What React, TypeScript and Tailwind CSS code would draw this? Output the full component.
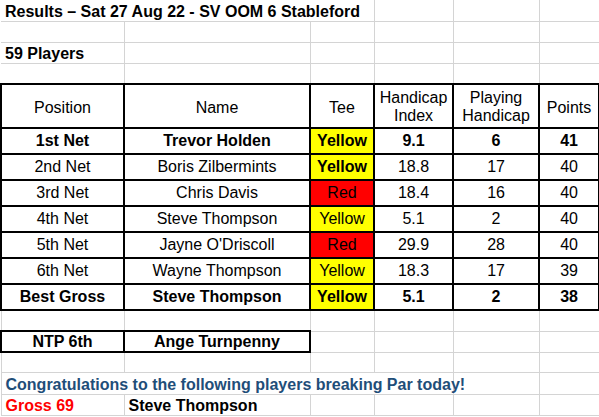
import React from 'react';

type Result = {
  pos: string;
  name: string;
  tee: 'Yellow' | 'Red';
  index: string;
  playing: string;
  points: string;
  bold?: boolean;
  teeBold?: boolean;
};

const results: Result[] = [
  { pos: '1st Net', name: 'Trevor Holden', tee: 'Yellow', index: '9.1', playing: '6', points: '41', bold: true, teeBold: true },
  { pos: '2nd Net', name: 'Boris Zilbermints', tee: 'Yellow', index: '18.8', playing: '17', points: '40', teeBold: true },
  { pos: '3rd Net', name: 'Chris Davis', tee: 'Red', index: '18.4', playing: '16', points: '40' },
  { pos: '4th Net', name: 'Steve Thompson', tee: 'Yellow', index: '5.1', playing: '2', points: '40' },
  { pos: '5th Net', name: "Jayne O'Driscoll", tee: 'Red', index: '29.9', playing: '28', points: '40' },
  { pos: '6th Net', name: 'Wayne Thompson', tee: 'Yellow', index: '18.3', playing: '17', points: '39' },
  { pos: 'Best Gross', name: 'Steve Thompson', tee: 'Yellow', index: '5.1', playing: '2', points: '38', bold: true, teeBold: true },
];

// plain sheet cell with gridlines, and a boxed (table) cell
const g = 'border border-[#d4d4d4] p-0';
const b = 'border-2 border-black p-0 text-center align-middle';

function EmptyCells({ n }: { n: number }) {
  return (
    <>
      {Array.from({ length: n }).map((_, i) => (
        <td key={i} className={g}></td>
      ))}
    </>
  );
}

export default function App() {
  return (
    <div className="w-[599px] h-[417px] bg-white overflow-hidden text-black text-[16px] leading-[18px] font-['Liberation_Sans',Arial,sans-serif]">
      <table className="border-collapse table-fixed w-[598px]">
        <colgroup>
          <col className="w-[123px]" />
          <col className="w-[186px]" />
          <col className="w-[64px]" />
          <col className="w-[79px]" />
          <col className="w-[86px]" />
          <col className="w-[60px]" />
        </colgroup>
        <tbody>
          <tr className="h-[21px]">
            <td colSpan={3} className={`${g} border-t-0 border-l-0 align-bottom pl-1 font-bold whitespace-nowrap`}>
              Results – Sat 27 Aug 22 - SV OOM 6 Stableford
            </td>
            <td className={`${g} border-t-0`}></td>
            <td className={`${g} border-t-0`}></td>
            <td className={`${g} border-t-0`}></td>
          </tr>
          <tr className="h-[21px]">
            <td className={`${g} border-l-0`}></td>
            <EmptyCells n={5} />
          </tr>
          <tr className="h-[21px]">
            <td className={`${g} border-l-0 align-bottom pl-1 font-bold whitespace-nowrap`}>59 Players</td>
            <EmptyCells n={5} />
          </tr>
          <tr className="h-[21px]">
            <td className={`${g} border-l-0`}></td>
            <EmptyCells n={5} />
          </tr>

          <tr className="h-[44px]">
            <td className={`${b} pt-1`}>Position</td>
            <td className={`${b} pt-1`}>Name</td>
            <td className={`${b} pt-1`}>Tee</td>
            <td className={`${b} pt-0.5`}>
              Handicap
              <br />
              Index
            </td>
            <td className={`${b} pt-0.5`}>
              Playing
              <br />
              Handicap
            </td>
            <td className={`${b} pt-1`}>Points</td>
          </tr>

          {results.map((r, i) => (
            <tr key={i} className={`h-[26px] ${r.bold ? 'font-bold' : ''}`}>
              <td className={b}>{r.pos}</td>
              <td className={b}>{r.name}</td>
              <td className={`${b} ${r.tee === 'Red' ? 'bg-[#ff0000]' : 'bg-[#ffff00]'} ${r.teeBold ? 'font-bold' : ''}`}>
                {r.tee}
              </td>
              <td className={b}>{r.index}</td>
              <td className={b}>{r.playing}</td>
              <td className={b}>{r.points}</td>
            </tr>
          ))}

          <tr className="h-[21px]">
            <EmptyCells n={6} />
          </tr>
          <tr className="h-[21px] font-bold">
            <td className={b}>NTP 6th</td>
            <td className={b}>Ange Turnpenny</td>
            <EmptyCells n={4} />
          </tr>
          <tr className="h-[20px]">
            <EmptyCells n={6} />
          </tr>
          <tr className="h-[22px]">
            <td colSpan={4} className={`${g} align-bottom pl-1 font-bold text-[#1f4e79] whitespace-nowrap`}>
              Congratulations to the following players breaking Par today!
            </td>
            <EmptyCells n={2} />
          </tr>
          <tr className="h-[21px] font-bold">
            <td className={`${g} align-bottom pl-1 text-[#ff0000]`}>Gross 69</td>
            <td className={`${g} align-bottom pl-1`}>Steve Thompson</td>
            <EmptyCells n={4} />
          </tr>
        </tbody>
      </table>
    </div>
  );
}
